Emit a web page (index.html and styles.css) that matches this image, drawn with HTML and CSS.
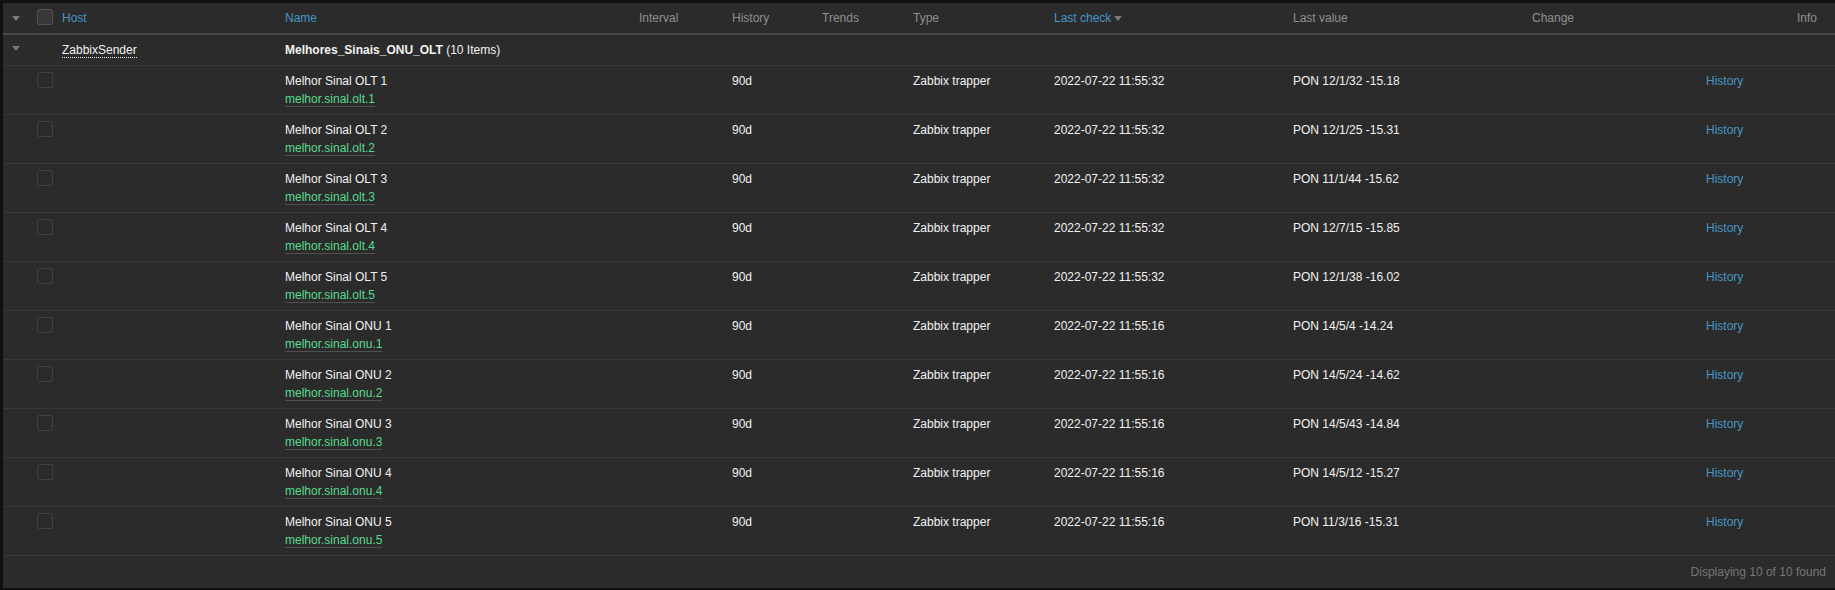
FILE: index.html
```html
<!DOCTYPE html>
<html>
<head>
<meta charset="utf-8">
<link rel="stylesheet" href="styles.css">
</head>
<body>
<div class="panel">
<table class="list">
<thead>
<tr>
<th class="c-tog"><svg class="tri tri-h" width="8" height="5" viewBox="0 0 8 5"><path d="M0 0H8L4 5Z" fill="#7a7a7a"/></svg></th>
<th class="c-chk"><span class="chk chk-h"></span></th>
<th class="c-host"><a class="sort">Host</a></th>
<th class="c-name"><a class="sort">Name</a></th>
<th class="c-int">Interval</th>
<th class="c-hist">History</th>
<th class="c-trend">Trends</th>
<th class="c-type">Type</th>
<th class="c-check"><a class="sort">Last check</a><svg class="sarrow" width="8" height="5" viewBox="0 0 8 5"><path d="M0 0H8L4 5Z" fill="#7a7a7a"/></svg></th>
<th class="c-val">Last value</th>
<th class="c-chg">Change</th>
<th class="c-link"></th>
<th class="c-info">Info</th>
</tr>
</thead>
<tbody>
<tr class="group">
<td><svg class="tri tri-g" width="8" height="5" viewBox="0 0 8 5"><path d="M0 0H8L4 5Z" fill="#7a7a7a"/></svg></td>
<td></td>
<td><span class="action">ZabbixSender</span></td>
<td colspan="10"><b>Melhores_Sinais_ONU_OLT</b> (10 Items)</td>
</tr>
<tr class="item"><td></td><td><span class="chk"></span></td><td></td><td><div class="l1">Melhor Sinal OLT 1</div><div class="l2"><span class="key">melhor.sinal.olt.1</span></div></td><td></td><td>90d</td><td></td><td>Zabbix trapper</td><td>2022-07-22 11:55:32</td><td>PON 12/1/32 -15.18</td><td></td><td><a class="lnk">History</a></td><td></td></tr>
<tr class="item"><td></td><td><span class="chk"></span></td><td></td><td><div class="l1">Melhor Sinal OLT 2</div><div class="l2"><span class="key">melhor.sinal.olt.2</span></div></td><td></td><td>90d</td><td></td><td>Zabbix trapper</td><td>2022-07-22 11:55:32</td><td>PON 12/1/25 -15.31</td><td></td><td><a class="lnk">History</a></td><td></td></tr>
<tr class="item"><td></td><td><span class="chk"></span></td><td></td><td><div class="l1">Melhor Sinal OLT 3</div><div class="l2"><span class="key">melhor.sinal.olt.3</span></div></td><td></td><td>90d</td><td></td><td>Zabbix trapper</td><td>2022-07-22 11:55:32</td><td>PON 11/1/44 -15.62</td><td></td><td><a class="lnk">History</a></td><td></td></tr>
<tr class="item"><td></td><td><span class="chk"></span></td><td></td><td><div class="l1">Melhor Sinal OLT 4</div><div class="l2"><span class="key">melhor.sinal.olt.4</span></div></td><td></td><td>90d</td><td></td><td>Zabbix trapper</td><td>2022-07-22 11:55:32</td><td>PON 12/7/15 -15.85</td><td></td><td><a class="lnk">History</a></td><td></td></tr>
<tr class="item"><td></td><td><span class="chk"></span></td><td></td><td><div class="l1">Melhor Sinal OLT 5</div><div class="l2"><span class="key">melhor.sinal.olt.5</span></div></td><td></td><td>90d</td><td></td><td>Zabbix trapper</td><td>2022-07-22 11:55:32</td><td>PON 12/1/38 -16.02</td><td></td><td><a class="lnk">History</a></td><td></td></tr>
<tr class="item"><td></td><td><span class="chk"></span></td><td></td><td><div class="l1">Melhor Sinal ONU 1</div><div class="l2"><span class="key">melhor.sinal.onu.1</span></div></td><td></td><td>90d</td><td></td><td>Zabbix trapper</td><td>2022-07-22 11:55:16</td><td>PON 14/5/4 -14.24</td><td></td><td><a class="lnk">History</a></td><td></td></tr>
<tr class="item"><td></td><td><span class="chk"></span></td><td></td><td><div class="l1">Melhor Sinal ONU 2</div><div class="l2"><span class="key">melhor.sinal.onu.2</span></div></td><td></td><td>90d</td><td></td><td>Zabbix trapper</td><td>2022-07-22 11:55:16</td><td>PON 14/5/24 -14.62</td><td></td><td><a class="lnk">History</a></td><td></td></tr>
<tr class="item"><td></td><td><span class="chk"></span></td><td></td><td><div class="l1">Melhor Sinal ONU 3</div><div class="l2"><span class="key">melhor.sinal.onu.3</span></div></td><td></td><td>90d</td><td></td><td>Zabbix trapper</td><td>2022-07-22 11:55:16</td><td>PON 14/5/43 -14.84</td><td></td><td><a class="lnk">History</a></td><td></td></tr>
<tr class="item"><td></td><td><span class="chk"></span></td><td></td><td><div class="l1">Melhor Sinal ONU 4</div><div class="l2"><span class="key">melhor.sinal.onu.4</span></div></td><td></td><td>90d</td><td></td><td>Zabbix trapper</td><td>2022-07-22 11:55:16</td><td>PON 14/5/12 -15.27</td><td></td><td><a class="lnk">History</a></td><td></td></tr>
<tr class="item"><td></td><td><span class="chk"></span></td><td></td><td><div class="l1">Melhor Sinal ONU 5</div><div class="l2"><span class="key">melhor.sinal.onu.5</span></div></td><td></td><td>90d</td><td></td><td>Zabbix trapper</td><td>2022-07-22 11:55:16</td><td>PON 11/3/16 -15.31</td><td></td><td><a class="lnk">History</a></td><td></td></tr>
</tbody>
</table>
<div class="paging">Displaying 10 of 10 found</div>
</div>
</body>
</html>
```
FILE: styles.css
```css
html, body {
  margin: 0;
  background: #0e1012;
}
body {
  padding: 3px 0 2px 3px;
  font-family: Arial, "Liberation Sans", sans-serif;
  font-size: 12px;
  color: #f2f2f2;
}
.panel {
  background: #2b2b2b;
}
.list {
  width: 100%;
  table-layout: fixed;
  border-collapse: separate;
  border-spacing: 0;
}
.list th, .list td {
  box-sizing: border-box;
  padding: 0 5px;
  text-align: left;
  white-space: nowrap;
  overflow: hidden;
}
.list th {
  font-weight: normal;
  color: #8f8f8f;
  line-height: 16px;
  padding-top: 7px;
  padding-bottom: 7px;
  border-bottom: 2px solid #474747;
  vertical-align: top;
}
.c-tog { width: 29px; }
.c-chk { width: 25px; }
.c-host { width: 223px; }
.c-name { width: 354px; }
.c-int { width: 93px; }
.c-hist { width: 90px; }
.c-trend { width: 91px; }
.c-type { width: 141px; }
.c-check { width: 239px; }
.c-val { width: 239px; }
.c-chg { width: 174px; }
.c-link { width: 91px; }
.sort { color: #4796c4; }
.sarrow {
  display: inline-block;
  margin-left: 3px;
  vertical-align: 1px;
}
.tri { display: block; }
.tri-h { margin: 6px 0 0 4px; }
.tri-g { margin: 4px 0 0 4px; }
.chk {
  display: block;
  box-sizing: border-box;
  width: 16px;
  height: 16px;
  border: 1px solid #404040;
  border-radius: 2px;
  margin-top: 0;
}
.chk-h {
  background: #383838;
  border-color: #505050;
  margin-top: -1px;
}
.group td {
  line-height: 16px;
  padding-top: 7px;
  padding-bottom: 7px;
  border-bottom: 1px solid #383838;
  vertical-align: top;
}
.action {
  border-bottom: 1px dotted #f2f2f2;
}
.item td {
  line-height: 18px;
  padding-top: 6px;
  padding-bottom: 5px;
  border-bottom: 1px solid #383838;
  vertical-align: top;
}
.item .l2 {
  line-height: 19px;
}
.key {
  color: #59db8f;
  border-bottom: 1px solid #4f4f4f;
}
.lnk { color: #4796c4; }
.paging {
  line-height: 16px;
  padding: 8px 9px 8px 0;
  text-align: right;
  color: #767676;
}
```
